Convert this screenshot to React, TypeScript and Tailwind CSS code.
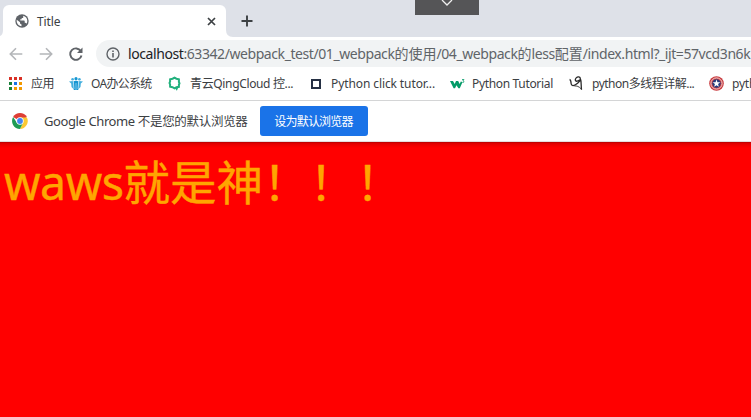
import React from 'react';

const dots = ['#d93025', '#d93025', '#d93025', '#188038', '#1a73e8', '#f29900', '#188038', '#f29900', '#f29900'];

function AppsIcon() {
  return (
    <svg width="13" height="13" viewBox="0 0 13 13">
      {dots.map((c, i) => (
        <rect key={i} x={(i % 3) * 5} y={Math.floor(i / 3) * 5} width="3" height="3" fill={c} />
      ))}
    </svg>
  );
}

function GlobeIcon() {
  return (
    <svg width="14" height="14" viewBox="0 0 14 14">
      <circle cx="7" cy="7" r="6.700" fill="#5f6368" />
      <path d="M1.700 5.800L5 8.200v1.300l1.500 1v1.700C3.500 12 1.300 9.300 1.700 5.800zM8.200 1.800c2.300.5 4.100 2.600 4.100 5.200 0 1-.3 2-.8 2.800-.4-.8-1-1.100-1.800-1.100V7.600c0-.6-.4-1-1-1H5.300V5.300h1.400V4h1.500z" fill="#fff" />
    </svg>
  );
}

function Arrow({ flip = false }: { flip?: boolean }) {
  return (
    <svg width="14" height="14" viewBox="0 0 14 14" fill="none" stroke="#b4b6b9" strokeWidth="1.6" className={flip ? 'rotate-180' : ''}>
      <path d="M13.300 7H1.600M7 1.300L1.300 7L7 12.700" />
    </svg>
  );
}

function Reload() {
  return (
    <svg width="14" height="14" viewBox="0 0 14 14" fill="none">
      <path d="M11.800 4.100A5.700 5.700 0 1 0 12.500 8.500" stroke="#5f6368" strokeWidth="1.900" />
      <path d="M13.500 .500V6H8z" fill="#5f6368" />
    </svg>
  );
}

function Info() {
  return (
    <svg width="14" height="14" viewBox="0 0 14 14" fill="none" stroke="#5f6368" strokeWidth="1.400">
      <circle cx="7" cy="7" r="6" />
      <path d="M7 6v4.500M7 3.400v1.500" strokeWidth="1.600" />
    </svg>
  );
}

function OaIcon() {
  return (
    <svg width="14" height="14" viewBox="0 0 14 14" fill="#1696d2">
      <circle cx="7" cy="1.700" r="1.600" />
      <circle cx="3.600" cy="2.300" r="1.300" fill="#42aedd" />
      <circle cx="10.400" cy="2.300" r="1.300" fill="#42aedd" />
      <path d="M0 4.600l3.800-.5L5 12.500 2.500 10 2.200 6.500z" fill="#42aedd" />
      <path d="M14 4.600l-3.800-.5L9 12.500l2.500-2.500.3-3.500z" fill="#42aedd" />
      <path d="M4.500 4.300L7 3.700l2.500.6L9.200 13H4.800z" />
      <path d="M4.300 4.500l.8 7.500M9.700 4.500l-.8 7.500M7 6v7" stroke="#c5eafa" strokeWidth=".6" />
    </svg>
  );
}

function QingIcon() {
  return (
    <svg width="13" height="15" viewBox="0 0 13 15" fill="none">
      <path d="M6.500 1.600L8.400 2.700L10.900 3.300V6L11.500 7.200L10.900 8.800V10.800L8.500 11.200L6.500 12.400L4.500 11.200L2.100 10.600V8.500L1.500 7L2.100 5.500V3.300L4.600 2.700Z" stroke="#22b07d" strokeWidth="2" />
      <path d="M6.500 11.500l4-.3-1.700 3.600z" fill="#22b07d" />
    </svg>
  );
}

function SquareIcon() {
  return (
    <svg width="10" height="10" viewBox="0 0 10 10">
      <rect x="1" y="1" width="8" height="8" fill="none" stroke="#263044" strokeWidth="2" />
    </svg>
  );
}

function SchoolsIcon() {
  return (
    <svg width="16" height="12" viewBox="0 0 16 12">
      <path d="M0 3h3l1.700 3L6 3h2.200l1.400 3L11 3.300l1.300 1.200-2.500 5.800H8.400L6.500 7.200 5 10.300H3.600z" fill="#049b68" />
      <path d="M12 1.500h2l-1.200 1.500c1.800 0 1.300 2-.4 1.500" fill="none" stroke="#049b68" strokeWidth=".8" />
    </svg>
  );
}

function InkIcon() {
  return (
    <svg width="15" height="15" viewBox="0 0 15 15" fill="none" stroke="#292929" strokeWidth="1.300">
      <path d="M.6 3.500c1.300.3 1.300 2 1.500 4 .2 2.400 2.100 2.500 4.300 1.200 2.700-1.600 5-3.400 5-5.700C11.300.6 8.800.3 7.200 1.900 5.700 3.500 6.200 5.500 8 5.200c2-.3 3.200-1.700 3.700-1.400.6 1.400.3 5.500.8 10" />
      <path d="M5.400 10c2.200-.3 4.600.4 6.900 3" strokeWidth=".9" />
    </svg>
  );
}

function ShieldIcon() {
  return (
    <svg width="15" height="15" viewBox="0 0 15 15">
      <circle cx="7.500" cy="7.500" r="7.300" fill="#c93b3f" />
      <circle cx="7.500" cy="7.500" r="5.600" fill="none" stroke="#f0d4d2" strokeWidth="1" />
      <circle cx="7.500" cy="7.500" r="4.200" fill="#263c7c" />
      <path d="M7.500 3.500l.95 2.750 2.900.05-2.300 1.750.85 2.800-2.400-1.650-2.400 1.650.85-2.800-2.300-1.750 2.900-.05z" fill="#fff" />
    </svg>
  );
}

function ChromeIcon() {
  return (
    <svg width="16" height="16" viewBox="0 0 16 16">
      <path d="M8 8L1.100 4A8 8 0 0 1 14.930 4z" fill="#de3e35" />
      <path d="M8 4.400H14.930A8 8 0 0 1 8 16L11.100 9.800z" fill="#fbc934" />
      <path d="M1.100 4A8 8 0 0 0 8 16L11.100 9.800 4.900 9.800z" fill="#1e9b55" />
      <circle cx="8" cy="8" r="3.700" fill="#fff" />
      <circle cx="8" cy="8" r="2.900" fill="#4285f4" />
    </svg>
  );
}

const bookmarks = [
  { icon: <AppsIcon />, label: '应用', box: 'ml-[9px] w-[60px]', gap: 'w-[22px]', text: 'tracking-[-0.5px]' },
  { icon: <OaIcon />, label: 'OA办公系统', box: 'w-[99px]', gap: 'w-[22px]', text: 'tracking-[-0.7px]' },
  { icon: <QingIcon />, label: '青云QingCloud 控...', box: 'w-[143px]', gap: 'w-[22px]', text: 'tracking-[-0.35px]' },
  { icon: <SquareIcon />, label: 'Python click tutor...', box: 'w-[139px]', gap: 'w-[20px]', text: 'tracking-[-0.1px]' },
  { icon: <SchoolsIcon />, label: 'Python Tutorial', box: 'w-[119px]', gap: 'w-[22px]', text: 'tracking-[-0.33px]' },
  { icon: <InkIcon />, label: 'python多线程详解...', box: 'w-[140px]', gap: 'w-[23px]', text: 'tracking-[-0.5px]' },
  { icon: <ShieldIcon />, label: 'pyth', box: 'w-[80px]', gap: 'w-[23px]', text: 'tracking-[-0.2px]' },
];

const address = [
  { text: ':63342/webpack_test/01_webpack', cjk: false },
  { text: '的使用', cjk: true },
  { text: '/04_webpack', cjk: false },
  { text: '的', cjk: true },
  { text: 'less', cjk: false },
  { text: '配置', cjk: true },
  { text: '/index.html?_ijt=57vcd3n6k', cjk: false },
];

export default function App() {
  return (
    <div className="relative flex h-[417px] w-[751px] flex-col overflow-hidden bg-white font-['Noto_Sans','Noto_Sans_CJK_SC',sans-serif] text-[#3c4043]">
      <header className="flex h-[37px] shrink-0 items-end bg-[#dee1e8]">
        <svg className="h-[7px] w-[3px]" viewBox="0 0 3 7"><path d="M3 0Q3 5 0 6V7H3z" fill="#fff" /></svg>
        <div className="flex h-8 w-[223px] rounded-t-[6px] bg-white">
          <div className="flex w-full items-center pl-[12px] pr-[10px]">
            <GlobeIcon />
            <span className="ml-[8px] translate-y-px text-[12px] leading-4 tracking-[-0.1px]">Title</span>
            <svg className="ml-auto" width="9" height="9" viewBox="0 0 9 9" stroke="#3c4043" strokeWidth="1.700">
              <path d="M1 1l7 7M8 1L1 8" />
            </svg>
          </div>
        </div>
        <svg className="h-[7px] w-[7px]" viewBox="0 0 7 7"><path d="M0 0Q0 7 7 7H0z" fill="#fff" /></svg>
        <svg className="mb-[10px] ml-[8px]" width="12" height="12" viewBox="0 0 12 12" stroke="#3c4043" strokeWidth="1.900">
          <path d="M6 .5v11M.5 6h11" />
        </svg>
      </header>
      <div className="absolute left-[415px] top-0 flex h-[15px] w-[64px] justify-center bg-[#555557]">
        <svg width="12" height="7" viewBox="0 0 12 7" fill="none" stroke="#f0f0f0" strokeWidth="1.300"><path d="M1 0l5 5 5-5" /></svg>
      </div>

      <div className="flex h-[30px] shrink-0 items-end">
        <div className="flex h-[27px] w-24 shrink-0 items-center gap-4 pl-[9px]">
          <Arrow /><Arrow flip /><Reload />
        </div>
        <div className="flex h-[27px] flex-1 items-center overflow-hidden rounded-l-full bg-[#f1f3f4] pl-[10px]">
          <span className="shrink-0"><Info /></span>
          <span className="ml-[8px] whitespace-nowrap text-[14px] leading-5 tracking-[-0.42px] text-[#606468]">
            <span className="text-[#202124]">localhost</span>
            {address.map((part) => (
              <span key={part.text} className={part.cjk ? 'tracking-[0px]' : 'tracking-[-0.42px]'}>{part.text}</span>
            ))}
          </span>
        </div>
      </div>

      <nav className="flex h-[34px] shrink-0 items-center overflow-hidden border-b border-[#d4d5d6]">
        {bookmarks.map((b) => (
          <div key={b.label} className={`flex shrink-0 items-center ${b.box}`}>
            <span className={`flex shrink-0 ${b.gap}`}>{b.icon}</span>
            <span className={`whitespace-nowrap text-[12px] leading-4 ${b.text}`}>{b.label}</span>
          </div>
        ))}
      </nav>

      <div className="flex h-[41px] shrink-0 items-center border-b border-[#e3dede] pl-3">
        <ChromeIcon />
        <span className="ml-[16px] w-[216px] whitespace-nowrap text-[13px] leading-5 tracking-[-0.4px]">Google Chrome <span className="text-[12.5px] tracking-[-0.3px]">不是您的默认浏览器</span></span>
        <button className="flex h-[30px] w-[108px] items-center justify-center rounded-[3px] bg-[#1a73e8] pr-px pt-px text-[12px] leading-4 tracking-[-0.8px] text-white">设为默认浏览器</button>
      </div>

      <main className="flex-1 bg-[linear-gradient(to_bottom,#a90000_0px,#db0000_1px,#ed0000_3px,#ff0000_6px)] pl-[4px] pt-[8px]">
        <h1 className="whitespace-nowrap text-[46.5px] leading-[64px] text-[#ffa500] [-webkit-text-stroke:0.4px_#ffa500]"><span className="tracking-[-0.5px]">waws</span>就是神！！！</h1>
      </main>
    </div>
  );
}
